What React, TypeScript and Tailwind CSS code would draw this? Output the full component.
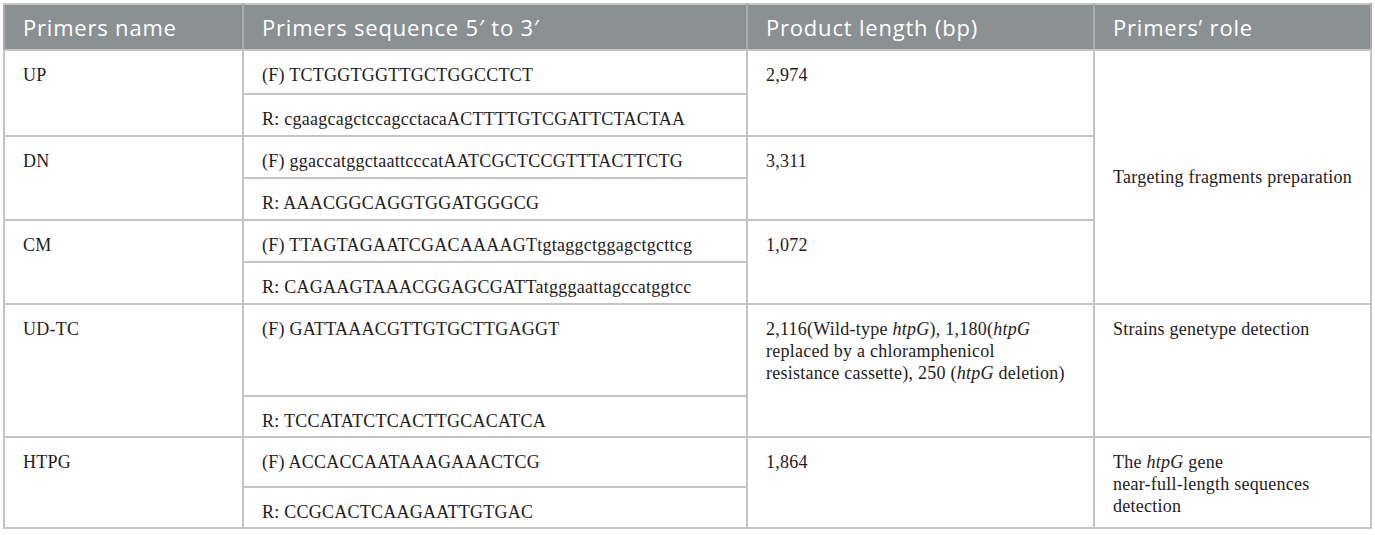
const serif = "font-['Liberation_Serif',serif]";

type Row = {
  name: string;
  f: React.ReactNode;
  r: React.ReactNode;
  len: React.ReactNode;
  fH: string;
  rH: string;
};

const rows: Row[] = [
  {
    name: "UP",
    f: "(F) TCTGGTGGTTGCTGGCCTCT",
    r: "R: cgaagcagctccagcctacaACTTTTGTCGATTCTACTAA",
    len: "2,974",
    fH: "h-[44px]",
    rH: "h-[42px]",
  },
  {
    name: "DN",
    f: "(F) ggaccatggctaattcccatAATCGCTCCGTTTACTTCTG",
    r: "R: AAACGGCAGGTGGATGGGCG",
    len: "3,311",
    fH: "h-[42px]",
    rH: "h-[42px]",
  },
  {
    name: "CM",
    f: "(F) TTAGTAGAATCGACAAAAGTtgtaggctggagctgcttcg",
    r: "R: CAGAAGTAAACGGAGCGATTatgggaattagccatggtcc",
    len: "1,072",
    fH: "h-[42px]",
    rH: "h-[42px]",
  },
];

const td = "border-2 border-[#c4c4c4] px-[18px] pt-[13px] pb-0 align-top text-left";
const th = "border-2 border-[#c4c4c4] border-x-[#a9adb0] px-[18px] text-left font-normal";

export default function App() {
  return (
    <div className="min-h-[535px] bg-white p-[3px]">
      <table
        className={`w-[1367px] table-fixed border-collapse text-[18px] leading-[22px] tracking-[0.25px] text-[#1f1c1d] ${serif}`}
      >
        <colgroup>
          <col className="w-[239px]" />
          <col className="w-[504px]" />
          <col className="w-[347px]" />
          <col className="w-[277px]" />
        </colgroup>
        <thead>
          <tr className="h-[46px] bg-[#8b9093] font-['Open_Sans',sans-serif] text-[22px] tracking-[0.8px] text-white">
            <th className={th}>Primers name</th>
            <th className={th}>Primers sequence 5′ to 3′</th>
            <th className={th}>Product length (bp)</th>
            <th className={th}>Primers’ role</th>
          </tr>
        </thead>
        <tbody>
          {rows.map((row, i) => (
            <>
              <tr key={row.name + "f"} className={row.fH}>
                <td rowSpan={2} className={td}>
                  {row.name}
                </td>
                <td className={td}>{row.f}</td>
                <td rowSpan={2} className={td}>
                  {row.len}
                </td>
                {i === 0 && (
                  <td rowSpan={6} className={`${td} !align-middle !pt-0 !pr-0 whitespace-nowrap`}>
                    Targeting fragments preparation
                  </td>
                )}
              </tr>
              <tr key={row.name + "r"} className={row.rH}>
                <td className={td}>{row.r}</td>
              </tr>
            </>
          ))}
          <tr className="h-[92px]">
            <td rowSpan={2} className={td}>
              UD-TC
            </td>
            <td className={td}>(F) GATTAAACGTTGTGCTTGAGGT</td>
            <td rowSpan={2} className={td}>
              2,116(Wild-type <i>htpG</i>), 1,180(<i>htpG</i>
              <br />
              replaced by a chloramphenicol
              <br />
              resistance cassette), 250 (<i>htpG</i> deletion)
            </td>
            <td rowSpan={2} className={td}>
              Strains genetype detection
            </td>
          </tr>
          <tr className="h-[41px]">
            <td className={td}>R: TCCATATCTCACTTGCACATCA</td>
          </tr>
          <tr className="h-[50px]">
            <td rowSpan={2} className={td}>
              HTPG
            </td>
            <td className={td}>(F) ACCACCAATAAAGAAACTCG</td>
            <td rowSpan={2} className={td}>
              1,864
            </td>
            <td rowSpan={2} className={td}>
              The <i>htpG</i> gene
              <br />
              near-full-length sequences
              <br />
              detection
            </td>
          </tr>
          <tr className="h-[41px]">
            <td className={td}>R: CCGCACTCAAGAATTGTGAC</td>
          </tr>
        </tbody>
      </table>
    </div>
  );
}
